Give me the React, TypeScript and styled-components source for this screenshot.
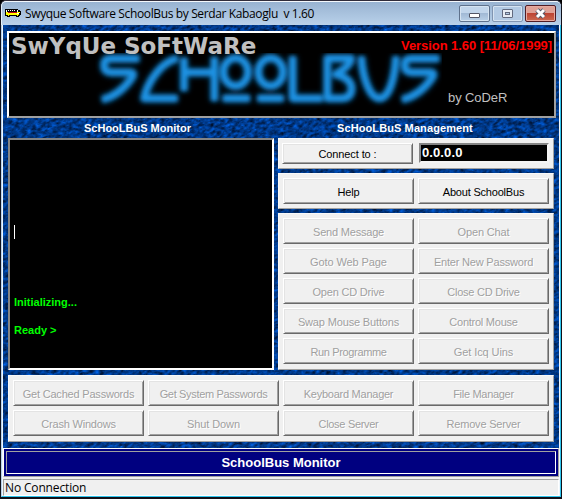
import React from "react";
import styled, { createGlobalStyle } from "styled-components";

const texture = encodeURIComponent(
  `<svg xmlns="http://www.w3.org/2000/svg" width="556" height="423"><filter id="n" x="0" y="0" width="100%" height="100%" color-interpolation-filters="sRGB"><feTurbulence type="fractalNoise" baseFrequency=".2 .36" numOctaves="4" seed="8"/><feColorMatrix values="0 0 0 0 0  .42 .2 0 0 -.09  .95 .45 0 0 -.17  0 0 0 0 1"/></filter><rect x="-150" y="-200" width="900" height="900" transform="rotate(-18)" filter="url(#n)"/></svg>`
);

const GlobalStyle = createGlobalStyle`
  * { box-sizing: border-box; }
  body { margin: 0; background: #000; overflow: hidden; }
  button, input { font: inherit; margin: 0; border-radius: 0; appearance: none; outline: 0; }
`;

const Window = styled.main`
  width: 562px;
  height: 499px;
  display: flex;
  flex-direction: column;
  border: 1px solid #101018;
  border-top-color: #302c3a;
  border-bottom-width: 2px;
  border-radius: 6px 6px 0 0;
  overflow: hidden;
  background: #b9d1ea;
  font-family: "Liberation Sans", Arial, sans-serif;
`;

const TitleBar = styled.header`
  height: 24px;
  flex: none;
  display: flex;
  align-items: flex-start;
  padding: 0 5px 0 3px;
  border-top: 1px solid #f4f8fc;
  border-left: 1px solid #e8f2fa;
  border-radius: 5px 5px 0 0;
  background: linear-gradient(#98b3d1, #b9d1ea);
`;

const BusIcon = styled.svg`
  width: 16px;
  height: 9px;
  margin-top: 7px;
  flex: none;
`;

const Title = styled.h1`
  margin: 3px 0 0 4px;
  flex: 1;
  font: 12px/18px "Open Sans", "Noto Sans", sans-serif;
  letter-spacing: -0.37px;
  white-space: pre;
  color: #000;
`;

const Captions = styled.div`
  display: flex;
  gap: 2px;
  margin-top: 3px;
`;

const CaptionButton = styled.button<{ $kind?: "close" | "muted" }>`
  width: 31px;
  height: 17px;
  padding: 0;
  display: grid;
  place-items: center;
  border: 1px solid ${p => (p.$kind === "close" ? "#501c24" : p.$kind === "muted" ? "#8195b1" : "#5e718c")};
  border-radius: 2px;
  box-shadow: inset 0 0 0 1px ${p => (p.$kind === "close" ? "#e6aaa0" : "#d5e3f1")};
  background: ${p =>
    p.$kind === "close"
      ? "linear-gradient(#dfa196 0 45%, #bd4433 50%, #cc6a50)"
      : p.$kind === "muted"
      ? "#b3cae4"
      : "linear-gradient(#c1d5eb 0 45%, #a1b9d5 50%, #b9d0e8)"};
  svg { display: block; }
`;

const MinimizeGlyph = styled.svg`
  margin-top: 4px;
`;

const Frame = styled.div`
  flex: 1;
  min-height: 0;
  display: flex;
  flex-direction: column;
  border: solid;
  border-width: 0 1px 1px;
  border-color: #d4ebfa #2fc6ee #2fc6ee #b9d1ea;
`;

const Client = styled.div`
  flex: 1;
  min-height: 0;
  display: flex;
  flex-direction: column;
  border: solid #eef6fc;
  border-width: 0 1px;
`;

const Desk = styled.div`
  height: 423px;
  flex: none;
  padding: 6px 5px 0 4px;
  background: #00398f url("data:image/svg+xml,${texture}");
`;

const Banner = styled.section`
  position: relative;
  width: 549px;
  height: 87px;
  border: 2px solid;
  border-color: #fff #a0a0a0 #a0a0a0 #fff;
  background: #000;
  overflow: hidden;
`;

const Logo = styled.svg`
  position: absolute;
  left: 86px;
  top: 20px;
  width: 347px;
  height: 57px;
`;

const Brand = styled.div`
  position: absolute;
  left: 2px;
  top: 0;
  font: bold 23px/27px "DejaVu Sans", Verdana, sans-serif;
  letter-spacing: -0.03px;
  white-space: nowrap;
  color: #c0c0c0;
`;

const Version = styled.div`
  position: absolute;
  right: 2px;
  top: 5px;
  font: bold 13px/16px "Liberation Sans", Arial, sans-serif;
  letter-spacing: -0.06px;
  white-space: nowrap;
  color: #f00;
`;

const Author = styled.div`
  position: absolute;
  left: 439px;
  top: 57px;
  font: 13px/16px "Liberation Sans", Arial, sans-serif;
  letter-spacing: -0.1px;
  white-space: nowrap;
  color: #c0c0c0;
`;

const Headings = styled.div`
  display: grid;
  grid-template-columns: 266px 276px;
  column-gap: 4px;
  padding-left: 1px;
  height: 20px;
`;

const Heading = styled.h2<{ $x: number; $spacing: number }>`
  margin: 0;
  padding-left: ${p => p.$x}px;
  font: bold 11px/20px "Liberation Sans", Arial, sans-serif;
  letter-spacing: ${p => p.$spacing}px;
  white-space: nowrap;
  color: #fff;
`;

const Columns = styled.div`
  display: grid;
  grid-template-columns: 266px 276px;
  column-gap: 4px;
  height: 232px;
  margin-left: 1px;
`;

const Console = styled.div`
  display: flex;
  flex-direction: column;
  align-items: flex-start;
  height: 232px;
  padding: 85px 4px 0;
  border: 2px solid;
  border-color: #858585 #fff #fff #858585;
  background: #000;
  color: #0f0;
  font: bold 11px/14px "Liberation Sans", Arial, sans-serif;
`;

const Caret = styled.i`
  width: 1px;
  height: 14px;
  margin-bottom: 56px;
  background: #fff;
`;

const ConsoleLine = styled.p`
  margin: 0 0 14px;
`;

const Stack = styled.div`
  display: flex;
  flex-direction: column;
  gap: 4px;
`;

const Panel = styled.div<{ $h: number; $cols?: number }>`
  height: ${p => p.$h}px;
  display: grid;
  grid-template-columns: repeat(${p => p.$cols ?? 2}, 131px);
  grid-auto-rows: 26px;
  gap: 4px;
  padding: 4px;
  border: 1px solid;
  border-color: #f8f8f8 #a0a0a0 #a0a0a0 #f8f8f8;
  background: #f0f0f0;
`;

const PushButton = styled.button<{ $ls: number }>`
  padding: 2px 0 0;
  border: 1px solid;
  border-color: #fff #696969 #696969 #fff;
  box-shadow: inset 1px 1px #e3e3e3, inset -1px -1px #a0a0a0;
  background: #f0f0f0;
  color: #000;
  font: 11px/14px "Liberation Sans", Arial, sans-serif;
  letter-spacing: ${p => p.$ls}px;
  white-space: nowrap;
  &:disabled {
    color: #a0a0a0;
    text-shadow: 1px 1px #fff;
  }
`;

const ConnectPanel = styled(Panel)`
  grid-template-columns: 131px 130px;
  grid-auto-rows: 21px;
  column-gap: 6px;
  padding-left: 3px;
  ${PushButton} { padding-top: 0; }
`;

const BottomPanel = styled(Panel)`
  margin: 5px 0 0 1px;
  width: 546px;
`;

const Address = styled.input`
  width: 130px;
  height: 20px;
  padding: 0 0 2px 1px;
  border: 2px solid;
  border-color: #858585 #f4f4f4 #f4f4f4 #858585;
  background: #000;
  color: #fff;
  && { font: bold 13px "Liberation Sans", Arial, sans-serif; letter-spacing: 0.1px; }
`;

const MonitorBar = styled.div`
  height: 29px;
  flex: none;
  padding: 2px;
  border: 1px solid;
  border-color: #fff #a0a0a0 #a0a0a0 #fff;
  background: #000080;
`;

const MonitorTitle = styled.div`
  height: 23px;
  border: 1px solid;
  border-color: #a0a0a0 #fff #fff #a0a0a0;
  text-align: center;
  font: bold 13px/22px "Liberation Sans", Arial, sans-serif;
  color: #fff;
`;

const StatusBar = styled.footer`
  flex: 1;
  padding-top: 2px;
  background: #f0f0f0;
`;

const StatusText = styled.div`
  height: 17px;
  padding-left: 1px;
  border: 1px solid;
  border-color: #a0a0a0 #fff #fff #a0a0a0;
  font: 12px/15px "Open Sans", "Noto Sans", sans-serif;
  letter-spacing: -0.15px;
  color: #000;
`;

const actions: [string, number][] = [
  ["Send Message", -0.2], ["Open Chat", -0.15],
  ["Goto Web Page", -0.1], ["Enter New Password", -0.2],
  ["Open CD Drive", -0.2], ["Close CD Drive", -0.25],
  ["Swap Mouse Buttons", -0.15], ["Control Mouse", -0.25],
  ["Run Programme", -0.35], ["Get Icq Uins", -0.1],
];

const serverActions: [string, number][] = [
  ["Get Cached Passwords", -0.2], ["Get System Passwords", -0.33],
  ["Keyboard Manager", -0.25], ["File Manager", -0.3],
  ["Crash Windows", -0.2], ["Shut Down", -0.1],
  ["Close Server", -0.3], ["Remove Server", -0.2],
];

const Bus = () => (
  <BusIcon viewBox="0 0 16 9" shapeRendering="crispEdges">
    <path d="M0 0H13V1H15V2H16V6H15V7H14V8H11V7H5V8H2V7H0Z" fill="#000" />
    <path d="M1 3H14V6H1Z" fill="#ff0" />
    <path d="M1 1H2V3H1ZM3 1H4V2H3ZM5 1H6V2H5ZM7 1H8V2H7ZM9 1H10V2H9ZM12 1H13V3H12Z" fill="#fff" />
    <path d="M3 3H12V4H3Z" fill="#c00018" />
    <path d="M12 4H14V5H12Z" fill="#fff" />
    <path d="M14 3H15V4H14ZM3 6H4V7H3ZM12 6H13V7H12Z" fill="#ff0" />
  </BusIcon>
);

const BannerLogo = () => (
  <Logo viewBox="0 24 1041 171">
    <defs>
      <filter id="soft" x="-5%" y="-20%" width="110%" height="140%">
        <feGaussianBlur stdDeviation="6.5" />
      </filter>
      <filter id="glow" x="-5%" y="-20%" width="110%" height="140%">
        <feGaussianBlur stdDeviation="9" />
      </filter>
      <g id="strokes" fill="none" strokeLinejoin="round">
        <path d="M133 41H46Q27 41 27 61T47 82H104Q122 82 110 99C88 131 58 155 21 164" />
        <path d="M248 40C200 50 158 108 147 160H248" />
        <path d="M267 38V138M267 82H358M358 36V168" />
        <ellipse cx="422" cy="81" rx="37" ry="42" />
        <path d="M383 160H465" />
        <ellipse cx="527" cy="81" rx="37" ry="42" />
        <path d="M487 160H566" />
        <path d="M593 34V160H683" />
        <path d="M697 160V40H768Q768 62 722 88Q770 100 770 132Q768 160 740 160Z" />
        <path d="M799 34C801 90 823 160 853 160S900 96 903 34" />
        <path d="M1033 41H947Q929 41 929 61T949 82H1005Q1023 82 1011 99C989 131 958 155 921 164" />
      </g>
    </defs>
    <use href="#strokes" stroke="#0b568f" strokeWidth="25" filter="url(#glow)" opacity=".7" />
    <use href="#strokes" stroke="#1b93e4" strokeWidth="20" filter="url(#soft)" />
  </Logo>
);

export default function App() {
  return (
    <>
      <GlobalStyle />
      <Window>
        <TitleBar>
          <Bus />
          <Title>{"Swyque Software SchoolBus by Serdar Kabaoglu  v 1.60"}</Title>
          <Captions>
            <CaptionButton aria-label="Minimize">
              <MinimizeGlyph width="11" height="5"><rect x=".5" y=".5" width="10" height="4" rx=".5" fill="#fff" stroke="#535666" /></MinimizeGlyph>
            </CaptionButton>
            <CaptionButton $kind="muted" aria-label="Maximize">
              <svg width="11" height="9"><rect x=".5" y=".5" width="10" height="8" rx=".5" fill="#e7edf5" stroke="#626a7f" /><rect x="3.5" y="3.5" width="4" height="2" fill="#b3cae4" stroke="#626a7f" /></svg>
            </CaptionButton>
            <CaptionButton $kind="close" aria-label="Close">
              <svg width="13" height="11" viewBox="0 0 13 11"><path d="M3 2L10 9M10 2L3 9" stroke="#535666" strokeWidth="4.8" /><path d="M3 2L10 9M10 2L3 9" stroke="#fff" strokeWidth="3" /></svg>
            </CaptionButton>
          </Captions>
        </TitleBar>
        <Frame>
          <Client>
            <Desk>
              <Banner>
                <BannerLogo />
                <Brand>SwYqUe SoFtWaRe</Brand>
                <Version>Version 1.60 [11/06/1999]</Version>
                <Author>by CoDeR</Author>
              </Banner>
              <Headings>
                <Heading $x={76} $spacing={0}>ScHooLBuS Monitor</Heading>
                <Heading $x={59} $spacing={0.1}>ScHooLBuS Management</Heading>
              </Headings>
              <Columns>
                <Console>
                  <Caret />
                  <ConsoleLine>Initializing...</ConsoleLine>
                  <ConsoleLine>Ready &gt;</ConsoleLine>
                </Console>
                <Stack>
                  <ConnectPanel $h={31}>
                    <PushButton $ls={-0.1}>Connect to :</PushButton>
                    <Address defaultValue="0.0.0.0" aria-label="Address" />
                  </ConnectPanel>
                  <Panel $h={36}>
                    <PushButton $ls={-0.1}>Help</PushButton>
                    <PushButton $ls={-0.2}>About SchoolBus</PushButton>
                  </Panel>
                  <Panel $h={157}>
                    {actions.map(([label, ls]) => (
                      <PushButton key={label} $ls={ls} disabled>{label}</PushButton>
                    ))}
                  </Panel>
                </Stack>
              </Columns>
              <BottomPanel $h={67} $cols={4}>
                {serverActions.map(([label, ls]) => (
                  <PushButton key={label} $ls={ls} disabled>{label}</PushButton>
                ))}
              </BottomPanel>
            </Desk>
            <MonitorBar>
              <MonitorTitle>SchoolBus Monitor</MonitorTitle>
            </MonitorBar>
            <StatusBar>
              <StatusText>No Connection</StatusText>
            </StatusBar>
          </Client>
        </Frame>
      </Window>
    </>
  );
}
